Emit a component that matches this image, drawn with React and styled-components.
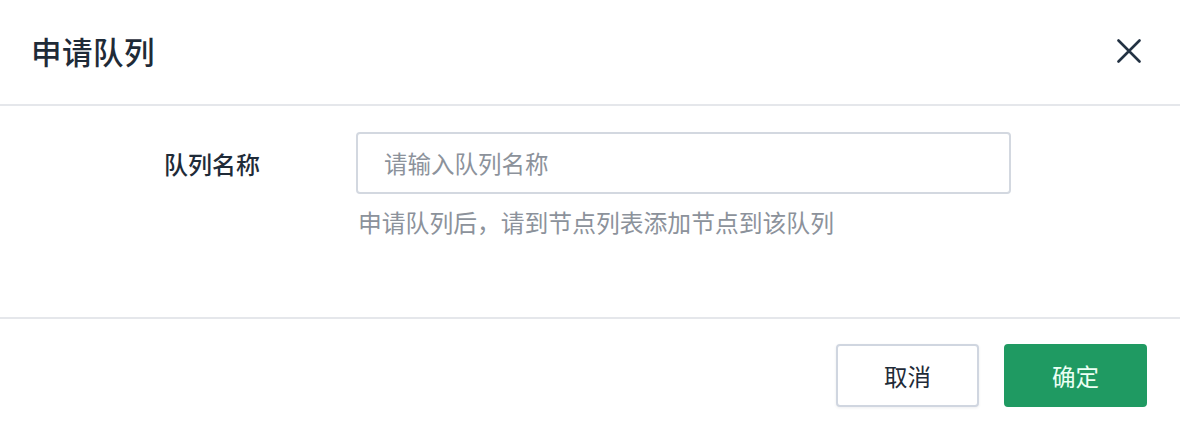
import React from "react";
import styled, { createGlobalStyle } from "styled-components";

const Global = createGlobalStyle`
  html, body { margin: 0; padding: 0; background: #ffffff; }
  body { font-family: "Noto Sans CJK SC", "Noto Sans", sans-serif; }
  * { box-sizing: border-box; }
`;

const Dialog = styled.div`
  width: 1180px;
  height: 422px;
  background: #fff;
  display: flex;
  flex-direction: column;
`;

const Header = styled.div`
  height: 106px;
  border-bottom: 2px solid #e5e7eb;
  display: flex;
  align-items: center;
  justify-content: space-between;
  padding: 0 38px 2px 31px;
`;

const Title = styled.h2`
  margin: 0;
  font-size: 30.5px;
  font-weight: 500;
  color: #1f2b38;
  letter-spacing: 0.5px;
`;

const CloseButton = styled.button`
  border: none;
  background: transparent;
  padding: 0;
  width: 26px;
  height: 26px;
  display: flex;
  align-items: center;
  justify-content: center;
  cursor: pointer;
`;

const Body = styled.div`
  height: 213px;
  border-bottom: 2px solid #e5e7eb;
  padding-top: 26px;
`;

const FormRow = styled.div`
  display: grid;
  grid-template-columns: 260px 655px;
  column-gap: 96px;
`;

const Label = styled.label`
  height: 62px;
  display: flex;
  align-items: center;
  justify-content: flex-end;
  font-size: 24px;
  font-weight: 500;
  color: #1f2b38;
`;

const Field = styled.div`
  display: flex;
  flex-direction: column;
`;

const Input = styled.input`
  height: 62px;
  width: 100%;
  border: 2px solid #d3d8e0;
  border-radius: 4px;
  padding: 0 26px;
  font-family: inherit;
  font-size: 23.5px;
  color: #1f2b38;
  outline: none;
  &::placeholder { color: #8c929b; }
`;

const Hint = styled.div`
  margin-top: 10px;
  font-size: 23.8px;
  line-height: 36px;
  color: #8c929b;
  padding-left: 2px;
`;

const Footer = styled.div`
  flex: 1;
  display: flex;
  justify-content: flex-end;
  align-items: flex-start;
  gap: 25px;
  padding: 25px 33px 0 0;
`;

const Button = styled.button`
  width: 143px;
  height: 63px;
  border-radius: 4px;
  font-family: inherit;
  font-size: 23.5px;
  cursor: pointer;
  border: 2px solid ${(p) => (p.$primary ? "#1f9a62" : "#d0d6e0")};
  background: ${(p) => (p.$primary ? "#1f9a62" : "#ffffff")};
  color: ${(p) => (p.$primary ? "#ecfff4" : "#1f2b38")};
  box-shadow: ${(p) => (p.$primary ? "none" : "0 1px 3px rgba(30,40,60,0.08)")};
`;

export default function App() {
  return (
    <>
      <Global />
      <Dialog>
        <Header>
          <Title>申请队列</Title>
          <CloseButton aria-label="关闭">
            <svg width="24" height="24" viewBox="0 0 24 24">
              <path d="M1.5 1.5 L22.5 22.5 M22.5 1.5 L1.5 22.5" stroke="#233243" strokeWidth="2.6" strokeLinecap="round" />
            </svg>
          </CloseButton>
        </Header>
        <Body>
          <FormRow>
            <Label>队列名称</Label>
            <Field>
              <Input placeholder="请输入队列名称" />
              <Hint>申请队列后，请到节点列表添加节点到该队列</Hint>
            </Field>
          </FormRow>
        </Body>
        <Footer>
          <Button>取消</Button>
          <Button $primary>确定</Button>
        </Footer>
      </Dialog>
    </>
  );
}
